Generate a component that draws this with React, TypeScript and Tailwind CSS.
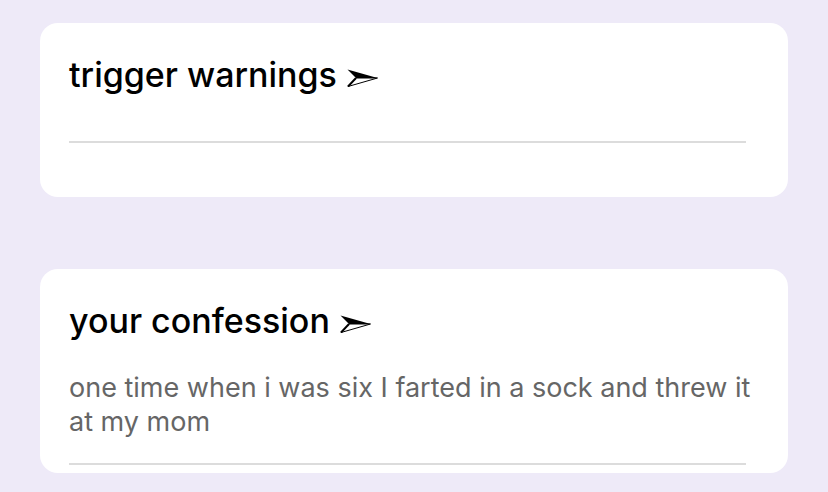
function Arrowhead() {
  return (
    <svg width="31" height="18" viewBox="0 0 31 18" className="inline-block ml-[10px] align-baseline">
      <polygon points="0.5,0.5 30.5,9 9,9" fill="#000" />
      <polygon points="9,9 30.5,9 1,17.5" fill="#fff" stroke="#000" strokeWidth="1" strokeLinejoin="miter" />
      <line x1="9" y1="9" x2="1" y2="17.5" stroke="#000" strokeWidth="2" />
    </svg>
  );
}

export default function App() {
  return (
    <div
      className="min-h-screen bg-[#eeeaf8] px-[40px] pt-[23px]"
      style={{ fontFamily: 'Inter, "Noto Sans", sans-serif' }}
    >
      {/* trigger warnings */}
      <section className="bg-white rounded-[18px] pl-[29px] pr-[42px] pt-[31px] h-[174px]">
        <h2 className="text-[34px] leading-[42px] font-medium text-black whitespace-nowrap">
          trigger warnings
          <Arrowhead />
        </h2>
        <div className="mt-[45px] h-[2px] bg-[#dcdcdc]" />
      </section>

      <div className="h-[72px]" />

      {/* your confession */}
      <section className="bg-white rounded-[18px] pl-[29px] pr-[24px] pt-[31px] pb-[8px]">
        <h2 className="text-[34px] leading-[42px] font-medium text-black whitespace-nowrap">
          your confession
          <Arrowhead />
        </h2>
        <p className="mt-[29px] text-[27px] leading-[34px] text-[#666666]">
          one time when i was six I farted in a sock and threw it at my mom
        </p>
        <div className="mt-[24px] mr-[18px] h-[2px] bg-[#dcdcdc]" />
      </section>
    </div>
  );
}
